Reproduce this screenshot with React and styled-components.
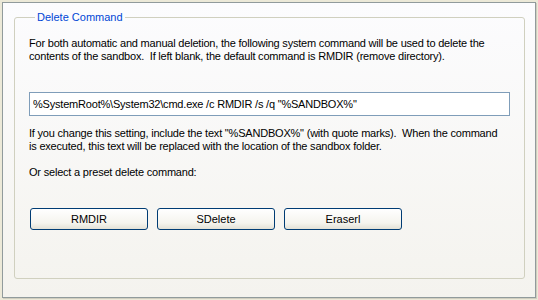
import React from "react";
import styled, { createGlobalStyle } from "styled-components";

const Global = createGlobalStyle`
  html, body { margin: 0; padding: 0; background: #ece9d8; }
  body { font-family: "Liberation Sans", Arial, sans-serif; font-size: 11px; }
`;

const Frame = styled.div`
  width: 538px;
  height: 300px;
  box-sizing: border-box;
  padding: 2px;
`;

const Page = styled.div`
  box-sizing: border-box;
  width: 534px;
  height: 296px;
  border: 1px solid #919b9c;
  box-shadow: 1px 1px 0 #d0cebf;
  background: linear-gradient(to bottom, #fcfcfe 0%, #f4f3ee 100%);
  padding: 7px 11px 0 11px;
`;

const Group = styled.fieldset`
  box-sizing: border-box;
  margin: 0;
  width: 510px;
  height: 269px;
  border: 1px solid #d0d0bf;
  border-radius: 3px;
  padding: 0 14px;
`;

const Legend = styled.legend`
  color: #0046d5;
  padding: 0 2px;
  margin-left: 6px;
  font-size: 11px;
  line-height: 15px;
`;

const Text = styled.p`
  margin: ${p => p.$mt}px 0 0 0;
  font-size: 11px;
  line-height: 13px;
  color: #000;
  letter-spacing: -0.2px;
  white-space: nowrap;
`;

const Input = styled.input`
  display: block;
  box-sizing: border-box;
  width: 481px;
  height: 24px;
  margin: 29px 0 0 0;
  border: 1px solid #7f9db9;
  background: #fff;
  padding: 0 3px;
  font-family: "Liberation Sans", Arial, sans-serif;
  font-size: 11px;
  letter-spacing: -0.2px;
  color: #000;
  outline: none;
`;

const Buttons = styled.div`
  display: flex;
  gap: 9px;
  margin: 29px 0 0 1px;
`;

const Button = styled.button`
  box-sizing: border-box;
  width: 118px;
  height: 22px;
  border: 1px solid #003c74;
  border-radius: 3px;
  background: linear-gradient(to bottom, #ffffff 0%, #f5f4ee 70%, #e3e1d6 100%);
  font-family: "Liberation Sans", Arial, sans-serif;
  font-size: 11px;
  color: #000;
  padding: 0;
`;

export default function App() {
  return (
    <Frame>
      <Global />
      <Page>
        <Group>
          <Legend>Delete Command</Legend>
          <Text $mt={12}>
            For both automatic and manual deletion, the following system command will be used to delete the
            <br />
            contents of the sandbox.&nbsp; If left blank, the default command is RMDIR (remove directory).
          </Text>
          <Input readOnly value={'%SystemRoot%\\System32\\cmd.exe /c RMDIR /s /q "%SANDBOX%"'} />
          <Text $mt={11}>
            If you change this setting, include the text "%SANDBOX%" (with quote marks).&nbsp; When the command
            <br />
            is executed, this text will be replaced with the location of the sandbox folder.
          </Text>
          <Text $mt={13}>Or select a preset delete command:</Text>
          <Buttons>
            <Button>RMDIR</Button>
            <Button>SDelete</Button>
            <Button>Eraserl</Button>
          </Buttons>
        </Group>
      </Page>
    </Frame>
  );
}
